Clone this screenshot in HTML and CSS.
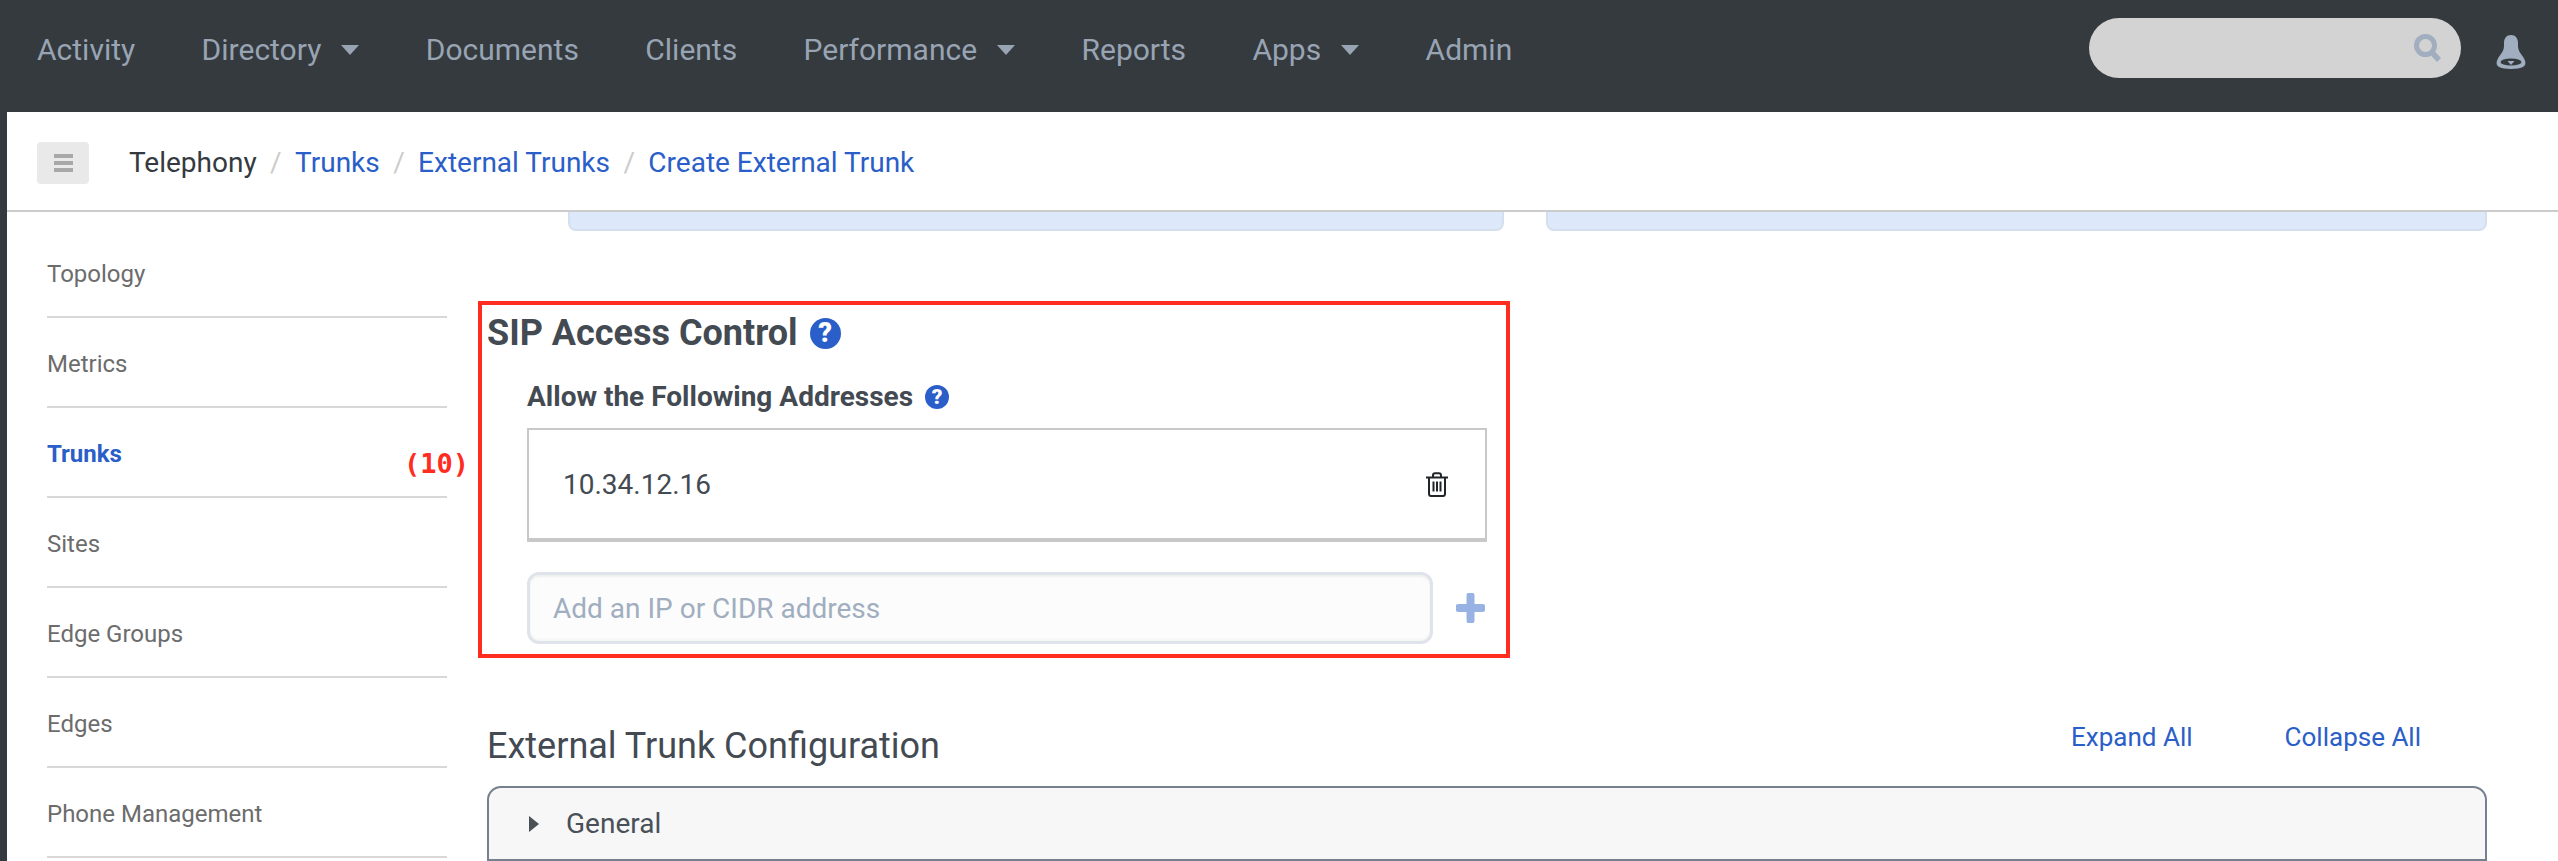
FILE: index.html
```html
<!DOCTYPE html>
<html lang="en">
<head>
<meta charset="utf-8">
<title>Create External Trunk</title>
<link rel="stylesheet" href="styles.css">
</head>
<body>
<header class="topnav">
  <nav class="nav-links">
    <a class="nav-item">Activity</a>
    <a class="nav-item">Directory<span class="caret"></span></a>
    <a class="nav-item">Documents</a>
    <a class="nav-item">Clients</a>
    <a class="nav-item">Performance<span class="caret"></span></a>
    <a class="nav-item">Reports</a>
    <a class="nav-item">Apps<span class="caret"></span></a>
    <a class="nav-item">Admin</a>
  </nav>
  <div class="nav-tools">
    <div class="search">
      <svg class="search-icon" viewBox="0 0 28 28"><circle cx="11.5" cy="11.5" r="9" fill="none" stroke="#a0aec0" stroke-width="5"/><path d="M17.5 18 L25 26" stroke="#a0aec0" stroke-width="5.5"/></svg>
    </div>
    <svg class="bell" viewBox="0 0 30 34"><path d="M15 0C10.5 0 8 3.500 8 8V11C8 17 3.500 20 1.500 24.500C-1 30 1 34 15 34C29 34 31 30 28.500 24.500C26.500 20 22 17 22 11V8C22 3.500 19.500 0 15 0Z" fill="#a0aec0"/><ellipse cx="15" cy="27" rx="10.500" ry="3.600" fill="#343a3e"/><path d="M11.500 26H18.500L15 30Z" fill="#a0aec0"/></svg>
  </div>
</header>
<div class="shell">
  <div class="crumbs">
    <button class="menu-btn"><span></span><span></span><span></span></button>
    <ol class="crumb-list">
      <li class="crumb-current">Telephony</li>
      <li><a>Trunks</a></li>
      <li><a>External Trunks</a></li>
      <li><a>Create External Trunk</a></li>
    </ol>
  </div>
  <div class="main">
    <aside class="side">
      <a class="side-item">Topology</a>
      <a class="side-item">Metrics</a>
      <a class="side-item active">Trunks<span class="note">(10)</span></a>
      <a class="side-item">Sites</a>
      <a class="side-item">Edge Groups</a>
      <a class="side-item">Edges</a>
      <a class="side-item">Phone Management</a>
    </aside>
    <section class="content">
      <div class="panels">
        <div class="blue-panel"></div>
        <div class="blue-panel"></div>
      </div>
      <div class="access">
        <h2 class="access-title">SIP Access Control<span class="help help-lg">?</span></h2>
        <div class="access-body">
          <h3 class="allow-title">Allow the Following Addresses<span class="help help-sm">?</span></h3>
          <div class="addr-box">
            <span class="addr-value">10.34.12.16</span>
            <svg class="trash" viewBox="0 0 22 25"><path d="M0 5.500H22M7 5V3.500C7 2 8 1.200 9 1.200H13C14 1.200 15 2 15 3.500V5M3 5.500V21.500C3 23 4 24 5 24H17C18 24 19 23 19 21.500V5.500M7.500 9.500V19.500M11 9.500V19.500M14.500 9.500V19.500" fill="none" stroke="#212529" stroke-width="2"/></svg>
          </div>
          <div class="addr-add">
            <input class="addr-input" placeholder="Add an IP or CIDR address">
            <svg class="plus" viewBox="0 0 29 30"><path d="M14.500 3V27M3 15H26" stroke="#97b2e3" stroke-width="8" stroke-linecap="round"/></svg>
          </div>
        </div>
      </div>
      <div class="config-head">
        <h2 class="config-title">External Trunk Configuration</h2>
        <div class="config-actions"><a>Expand All</a><a>Collapse All</a></div>
      </div>
      <div class="accordion">
        <div class="acc-head"><span class="acc-arrow"></span>General</div>
      </div>
    </section>
  </div>
</div>
</body>
</html>
```
FILE: styles.css
```css
* { box-sizing: border-box; }
html, body { margin: 0; height: 861px; overflow: hidden; }
body { background: #343a3e; font-family: Roboto, "Liberation Sans", sans-serif; color: #495057; }
a { text-decoration: none; }

.topnav { height: 112px; display: flex; align-items: center; justify-content: space-between; padding: 0 32px 16px 37px; }
.nav-links { display: flex; align-items: center; gap: 66.400px; margin-top: 4px; }
.nav-item { display: flex; align-items: center; color: #98a4b3; font-size: 30px; line-height: 1; }
.caret { width: 0; height: 0; margin-left: 20px; border-left: 9.500px solid transparent; border-right: 9.500px solid transparent; border-top: 10px solid #98a4b3; }
.nav-tools { display: flex; align-items: center; gap: 35px; }
.search { width: 372px; height: 60px; border-radius: 30px; background: #d3d3d3; display: flex; align-items: center; justify-content: flex-end; padding-right: 19px; }
.search-icon { width: 28px; height: 28px; }
.bell { width: 30px; height: 34px; margin-top: 8px; }

.shell { margin-left: 7px; height: 749px; background: #fff; overflow: hidden; }
.crumbs { height: 100px; display: flex; align-items: center; border-bottom: 2px solid #ccc; padding: 4px 0 0 30px; }
.menu-btn { width: 52px; height: 42px; border: 0; padding: 0; border-radius: 4px; background: #e9e9e9; display: flex; flex-direction: column; align-items: center; justify-content: center; gap: 3px; }
.menu-btn span { width: 19px; height: 4px; background: #a8a8a8; }
.crumb-list { list-style: none; display: flex; margin: 0 0 0 40px; padding: 0; font-size: 28px; line-height: 1; }
.crumb-list li + li::before { content: "/"; color: #ccc; margin: 0 13.400px; }
.crumb-list a { color: #2a5ec8; }
.crumb-current { color: #343a40; }

.main { display: flex; }
.side { width: 400px; flex: none; margin-left: 40px; padding-top: 16px; display: flex; flex-direction: column; }
.side-item { position: relative; height: 90px; flex: none; display: flex; align-items: center; border-bottom: 2px solid #d8d8d8; padding-top: 4px; color: #6c6c6c; font-size: 24px; }
.side-item.active { color: #2a5ec8; font-weight: 700; }
.note { position: absolute; left: 357px; top: 42px; color: #ff2d1f; font: 700 27px/1 "DejaVu Sans Mono", monospace; }

.content { width: 2000px; margin-left: 40px; display: flex; flex-direction: column; }
.panels { display: grid; grid-template-columns: 936px 941px; gap: 42px; padding-left: 81px; }
.blue-panel { height: 19px; background: #dde9fb; border: 2px solid #d5e0ee; border-top: 0; border-radius: 0 0 8px 8px; }

.access { width: 1032px; height: 357px; margin: 70px 0 0 -9px; border: 4px solid #ff2d1f; padding: 0 5px; }
.access-title { margin: 8px 0 0; display: flex; align-items: center; font-size: 36px; line-height: 40px; font-weight: 700; color: #434a52; }
.help { display: inline-flex; align-items: center; justify-content: center; border-radius: 50%; background: #2a5ec8; color: #fff; font-weight: 900; }
.help-lg { width: 31px; height: 31px; margin-left: 12px; font-size: 27px; }
.help-sm { width: 24px; height: 24px; margin-left: 12px; font-size: 21px; }
.access-body { padding-left: 40px; }
.allow-title { margin: 28px 0 0; display: flex; align-items: center; font-size: 28px; line-height: 32px; font-weight: 700; color: #434a52; }
.addr-box { width: 960px; height: 114px; margin-top: 15px; border: 2px solid #c8c8c8; border-bottom-width: 4px; display: flex; align-items: center; justify-content: space-between; padding: 0 37px 0 34px; }
.addr-value { font-size: 28px; color: #434a52; }
.trash { width: 22px; height: 25px; }
.addr-add { display: flex; align-items: center; width: 960px; margin-top: 30px; }
.addr-input { width: 906px; height: 72px; border: 3px solid #dfe3ea; border-radius: 12px; background: #fcfcfc; box-shadow: inset 0 2px 2px rgba(0,0,0,.05), inset 0 -2px 2px rgba(0,0,0,.03); padding: 0 23px; font: 28px Roboto, sans-serif; color: #434a52; outline: 0; }
.addr-input::placeholder { color: #a0aec0; opacity: 1; }
.plus { width: 29px; height: 30px; margin-left: 23px; }

.config-head { display: flex; justify-content: space-between; margin-top: 58px; height: 70px; }
.config-title { margin: 0; font-size: 36px; line-height: 60px; font-weight: 400; color: #434a52; }
.config-actions { display: flex; gap: 92px; padding: 4px 66px 0 0; font-size: 26px; line-height: 34px; }
.config-actions a { color: #2a5ec8; }
.accordion { border: 2px solid #76808e; border-radius: 14px 14px 0 0; background: #f7f7f7; height: 200px; }
.acc-head { height: 73px; border-bottom: 2px solid #76808e; display: flex; align-items: center; padding-left: 40px; font-size: 28px; color: #495057; }
.acc-arrow { width: 0; height: 0; margin-right: 27px; border-top: 8px solid transparent; border-bottom: 8px solid transparent; border-left: 10px solid #495057; }
```
